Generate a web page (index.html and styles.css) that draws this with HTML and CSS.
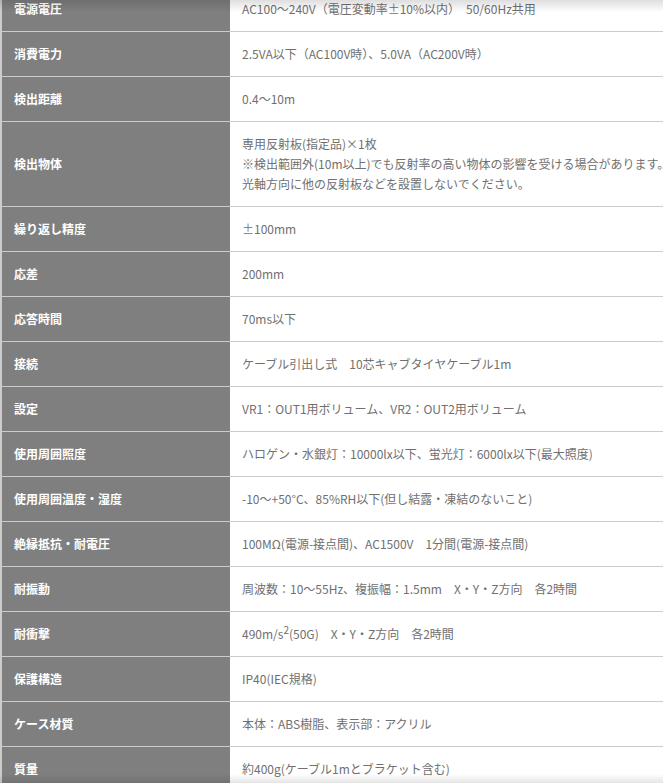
FILE: index.html
```html
<!DOCTYPE html>
<html lang="ja">
<head>
<meta charset="utf-8">
<title>仕様</title>
<link rel="stylesheet" href="styles.css">
</head>
<body>
<div class="page">
  <table class="spec">
    <tbody>
      <tr><th>電源電圧</th><td>AC100〜240V（電圧変動率±10%以内）　50/60Hz共用</td></tr>
      <tr><th>消費電力</th><td>2.5VA以下（AC100V時）、5.0VA（AC200V時）</td></tr>
      <tr><th>検出距離</th><td>0.4〜10m</td></tr>
      <tr><th>検出物体</th><td>専用反射板(指定品)×1枚<br>※検出範囲外(10m以上)でも反射率の高い物体の影響を受ける場合があります。<br>光軸方向に他の反射板などを設置しないでください。</td></tr>
      <tr><th>繰り返し精度</th><td>±100mm</td></tr>
      <tr><th>応差</th><td>200mm</td></tr>
      <tr><th>応答時間</th><td>70ms以下</td></tr>
      <tr><th>接続</th><td>ケーブル引出し式　10芯キャブタイヤケーブル1m</td></tr>
      <tr><th>設定</th><td>VR1：OUT1用ボリューム、VR2：OUT2用ボリューム</td></tr>
      <tr><th>使用周囲照度</th><td>ハロゲン・水銀灯：10000lx以下、蛍光灯：6000lx以下(最大照度)</td></tr>
      <tr><th>使用周囲温度・湿度</th><td>-10〜+50°C、85%RH以下(但し結露・凍結のないこと)</td></tr>
      <tr><th>絶縁抵抗・耐電圧</th><td>100MΩ(電源-接点間)、AC1500V　1分間(電源-接点間)</td></tr>
      <tr><th>耐振動</th><td>周波数：10〜55Hz、複振幅：1.5mm　X・Y・Z方向　各2時間</td></tr>
      <tr><th>耐衝撃</th><td>490m/s<sup>2</sup>(50G)　X・Y・Z方向　各2時間</td></tr>
      <tr><th>保護構造</th><td>IP40(IEC規格)</td></tr>
      <tr><th>ケース材質</th><td>本体：ABS樹脂、表示部：アクリル</td></tr>
      <tr><th>質量</th><td>約400g(ケーブル1mとブラケット含む)</td></tr>
    </tbody>
  </table>
  <div class="shade shade-top"></div>
  <div class="shade shade-bottom"></div>
</div>
</body>
</html>
```

FILE: styles.css
```css
html, body {
  margin: 0;
  padding: 0;
  background: #ffffff;
}

body {
  width: 663px;
  height: 783px;
  overflow: hidden;
  font-family: "Noto Sans CJK JP", "Noto Sans", sans-serif;
}

.page {
  position: relative;
  width: 663px;
  height: 783px;
  overflow: hidden;
}

.spec {
  border-collapse: collapse;
  width: 720px;
  margin-top: -14px;
  border-left: 2px solid #cccccc;
}

.spec th,
.spec td {
  padding: 12px 12px;
  line-height: 20px;
  font-size: 12px;
  border-top: 1px solid #cccccc;
  vertical-align: middle;
  text-align: left;
  white-space: nowrap;
}

.spec th {
  width: 204px;
  background: #7f7f7f;
  color: #ffffff;
  font-weight: 700;
}

.spec td {
  color: #707070;
  font-weight: 400;
}

.spec sup {
  font-size: 10px;
  line-height: 0;
  vertical-align: 5px;
}

.shade {
  position: absolute;
  left: 0;
  right: 0;
  pointer-events: none;
}

.shade-top {
  top: 0;
  height: 12px;
  background: linear-gradient(to bottom, rgba(0,0,0,0.13), rgba(0,0,0,0));
}

.shade-bottom {
  bottom: 0;
  height: 9px;
  background: linear-gradient(to top, rgba(0,0,0,0.10), rgba(0,0,0,0));
}
```
